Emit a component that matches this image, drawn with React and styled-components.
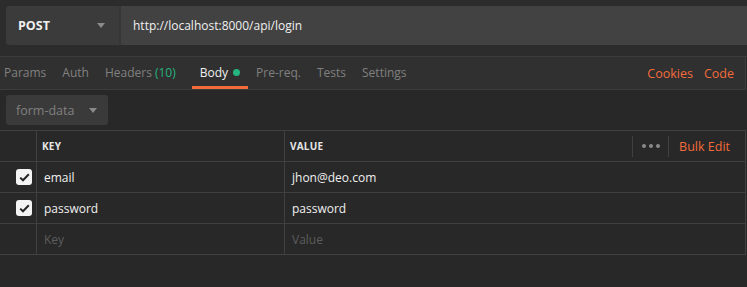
import React from 'react';
import styled, { createGlobalStyle } from 'styled-components';

const GlobalStyle = createGlobalStyle`
  html, body {
    margin: 0;
    padding: 0;
    background: #282828;
    font-family: "Open Sans", "Liberation Sans", sans-serif;
  }
  * { box-sizing: border-box; }
`;

const Page = styled.div`
  width: 747px;
  height: 287px;
  background: #282828;
  overflow: hidden;
  font-size: 12px;
`;

const TopBar = styled.div`
  height: 57px;
  background: #2c2c2c;
  padding: 6px 0 0 6px;
  border-bottom: 1px solid #3c3c3c;
  display: flex;
  align-items: flex-start;
`;

const MethodBox = styled.div`
  width: 115px;
  height: 39px;
  background: #3b3b3b;
  border-radius: 3px 0 0 3px;
  display: flex;
  align-items: center;
  justify-content: space-between;
  padding: 0 14px 0 12px;
  color: #f0f0f0;
  font-weight: 700;
  font-size: 12.5px;
  border-right: 2px solid #363636;
`;

const Caret = styled.span`
  width: 0;
  height: 0;
  border-left: 4px solid transparent;
  border-right: 4px solid transparent;
  border-top: 5px solid ${p => p.color || '#8a8a8a'};
`;

const UrlBox = styled.div`
  flex: 1;
  height: 39px;
  background: #424242;
  display: flex;
  align-items: center;
  padding-left: 12px;
  color: #f0f0f0;
`;

const TabBar = styled.div`
  height: 33px;
  background: #303030;
  border-bottom: 1px solid #3c3c3c;
  border-right: 1px solid #3c3c3c;
  width: 746px;
  display: flex;
  align-items: stretch;
  justify-content: space-between;
  padding: 0 11px 0 4px;
  font-size: 12px;
`;

const Tabs = styled.div`
  display: flex;
  align-items: stretch;
`;

const Tab = styled.div`
  display: flex;
  align-items: center;
  gap: 5px;
  padding: 3px ${p => (p.$active ? '8px' : '0')} 1px;
  margin-right: ${p => (p.$active ? '8px' : '16px')};
  color: ${p => (p.$active ? '#f0f0f0' : '#808080')};
  border-bottom: 3px solid ${p => (p.$active ? '#f26b3a' : 'transparent')};
`;

const Count = styled.span`
  color: #26b47f;
`;

const Dot = styled.span`
  width: 7px;
  height: 7px;
  border-radius: 50%;
  background: #26b47f;
`;

const Links = styled.div`
  display: flex;
  align-items: center;
  gap: 11px;
  color: #f26b3a;
  font-size: 12.5px;
`;

const Body = styled.div`
  padding-top: 5px;
`;

const ModeSelect = styled.div`
  margin-left: 6px;
  width: 102px;
  height: 30px;
  border-radius: 3px;
  background: #3a3a3a;
  display: flex;
  align-items: center;
  gap: 15px;
  padding-left: 10px;
  color: #808080;
  font-size: 12.5px;
`;

const Table = styled.div`
  margin-top: 5px;
  width: 746px;
  border-top: 1px solid #404040;
  border-right: 1px solid #404040;
`;

const Row = styled.div`
  display: grid;
  grid-template-columns: 36px 248px 1fr;
  height: 31px;
  border-bottom: 1px solid #404040;
  color: ${p => (p.$placeholder ? '#5c5c5c' : '#f0f0f0')};
`;

const Cell = styled.div`
  display: flex;
  align-items: center;
  padding-left: ${p => p.$pad || '7px'};
  border-left: ${p => (p.$first ? 'none' : '1px solid #404040')};
`;

const HeadCell = styled(Cell)`
  font-size: 10px;
  font-weight: 700;
  color: #e6e6e6;
  letter-spacing: 0.2px;
  padding-left: 5px;
`;

const HeadRight = styled(HeadCell)`
  justify-content: space-between;
  padding-right: 15px;
`;

const Actions = styled.div`
  display: flex;
  align-items: center;
  height: 100%;
`;

const Sep = styled.span`
  width: 1px;
  height: 21px;
  background: #404040;
`;

const More = styled.span`
  display: flex;
  gap: 3px;
  padding: 0 8px 0 9px;
  span {
    width: 4px;
    height: 4px;
    border-radius: 50%;
    background: #8a8a8a;
  }
`;

const BulkEdit = styled.span`
  color: #f26b3a;
  font-weight: 400;
  font-size: 12.5px;
  letter-spacing: 0;
  margin-left: 10px;
`;

const Check = styled.span`
  width: 16px;
  height: 16px;
  border-radius: 3px;
  background: #f4f4f4;
  display: flex;
  align-items: center;
  justify-content: center;
`;

const CheckBox = () => (
  <Check>
    <svg width="11" height="9" viewBox="0 0 11 9">
      <path d="M1.2 4.6 L4 7.3 L9.8 1.3" fill="none" stroke="#262626" strokeWidth="2" />
    </svg>
  </Check>
);

const rows = [
  { key: 'email', value: 'jhon@deo.com' },
  { key: 'password', value: 'password' },
];

const App = () => {
  return (
    <Page>
      <GlobalStyle />
      <TopBar>
        <MethodBox>
          POST
          <Caret />
        </MethodBox>
        <UrlBox>http://localhost:8000/api/login</UrlBox>
      </TopBar>
      <TabBar>
        <Tabs>
          <Tab>Params</Tab>
          <Tab>Auth</Tab>
          <Tab>
            <span>
              Headers <Count>(10)</Count>
            </span>
          </Tab>
          <Tab $active>
            Body <Dot />
          </Tab>
          <Tab>Pre-req.</Tab>
          <Tab>Tests</Tab>
          <Tab>Settings</Tab>
        </Tabs>
        <Links>
          <span>Cookies</span>
          <span>Code</span>
        </Links>
      </TabBar>
      <Body>
        <ModeSelect>
          form-data
          <Caret color="#8a8a8a" />
        </ModeSelect>
        <Table>
          <Row>
            <Cell $first />
            <HeadCell>KEY</HeadCell>
            <HeadRight>
              VALUE
              <Actions>
                <Sep />
                <More>
                  <span />
                  <span />
                  <span />
                </More>
                <Sep />
                <BulkEdit>Bulk Edit</BulkEdit>
              </Actions>
            </HeadRight>
          </Row>
          {rows.map(r => (
            <Row key={r.key}>
              <Cell $first $pad="16px">
                <CheckBox />
              </Cell>
              <Cell>{r.key}</Cell>
              <Cell>{r.value}</Cell>
            </Row>
          ))}
          <Row $placeholder>
            <Cell $first />
            <Cell>Key</Cell>
            <Cell>Value</Cell>
          </Row>
        </Table>
      </Body>
    </Page>
  );
};

export default App;
